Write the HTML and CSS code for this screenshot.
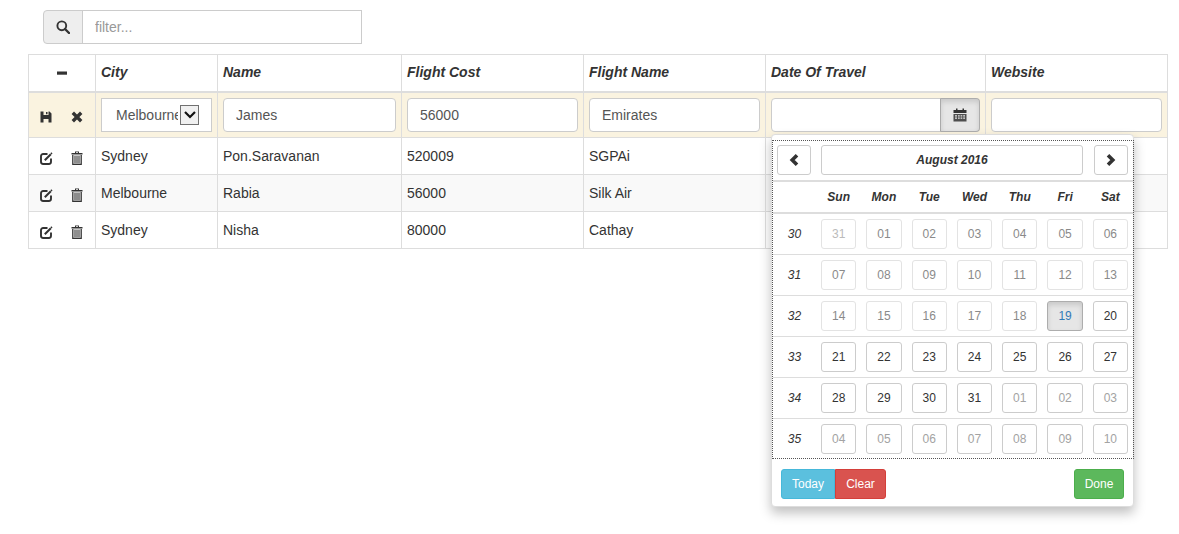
FILE: index.html
```html
<!DOCTYPE html>
<html lang="en">
<head>
    <meta charset="UTF-8">
    <title>Flights</title>
    <link rel="stylesheet" href="styles.css">
</head>
<body>
    <svg class="icon-defs" width="0" height="0">
        <symbol id="i-search" viewBox="0 0 14 14"><circle cx="5.8" cy="5.8" r="4.4" fill="none" stroke="currentColor" stroke-width="1.9"/><path d="M9 9l4 4" stroke="currentColor" stroke-width="2.4" stroke-linecap="round"/></symbol>
        <symbol id="i-minus" viewBox="0 0 14 14"><rect x="2" y="5.500" width="10" height="3.200" fill="currentColor"/></symbol>
        <symbol id="i-save" viewBox="0 0 14 14"><path fill="currentColor" fill-rule="evenodd" d="M1.500 1.500h9L12.500 3.500v9h-3V9h-5v3.500h-3zM4.500 1.500v3.500h5V1.500zM7 2h1.500v2.200H7z"/></symbol>
        <symbol id="i-remove" viewBox="0 0 14 14"><path d="M2.800 2.800l8.400 8.400M11.200 2.800l-8.400 8.400" stroke="currentColor" stroke-width="3.400"/></symbol>
        <symbol id="i-edit" viewBox="0 0 14 14"><path d="M8.500 3H4.200A2.200 2.200 0 0 0 2 5.200v5.600A2.200 2.200 0 0 0 4.200 13h5.600a2.200 2.200 0 0 0 2.200-2.200V7.500" fill="none" stroke="currentColor" stroke-width="1.900"/><path d="M5.800 9.200l6-6" stroke="currentColor" stroke-width="2"/><path fill="currentColor" d="M12.300 1.300l1.200 1.200-.9.900-1.200-1.200z"/></symbol>
        <symbol id="i-trash" viewBox="0 0 14 14"><path fill="currentColor" d="M5 .5h4v1.500h3.500v1.500h-11V2H5zM6 1.200V2h2v-.8z"/><path d="M2.800 4v9.300h8.400V4" fill="none" stroke="currentColor" stroke-width="1.300"/><path d="M5 4.500v8M7 4.500v8M9 4.500v8" stroke="currentColor" stroke-width="1.100"/></symbol>
        <symbol id="i-calendar" viewBox="0 0 14 14"><path fill="currentColor" d="M3 .5h1.500V2h5V.5H11V2h2.500v3H.5V2H3z"/><path fill="currentColor" fill-rule="evenodd" fill-opacity=".85" d="M.5 6h13v7.500H.5zM2 7.200v1.300h2V7.200zM5 7.200v1.300h1.700V7.200zM7.600 7.200v1.300h1.700V7.200zM10.200 7.200v1.300H12V7.200zM2 9.500v1.300h2V9.500zM5 9.500v1.300h1.700V9.500zM7.600 9.500v1.300h1.700V9.500zM10.200 9.500v1.300H12V9.500z"/></symbol>
        <symbol id="i-left" viewBox="0 0 14 14"><path d="M10 2.200L5.200 7l4.800 4.800" fill="none" stroke="currentColor" stroke-width="3.600"/></symbol>
        <symbol id="i-right" viewBox="0 0 14 14"><path d="M4 2.200L8.800 7 4 11.800" fill="none" stroke="currentColor" stroke-width="3.600"/></symbol>
        <symbol id="i-down" viewBox="0 0 14 14"><path d="M2 4l5 5 5-5" fill="none" stroke="currentColor" stroke-width="2.200"/></symbol>
    </svg>

    <div class="filter">
        <span class="filter-addon"><svg class="icon"><use href="#i-search"/></svg></span>
        <input class="filter-input" type="text" placeholder="filter...">
    </div>

    <div class="grid-wrap">
        <table class="grid">
            <colgroup>
                <col class="col-actions"><col class="col-city"><col class="col-name"><col class="col-cost">
                <col class="col-flight"><col class="col-date"><col class="col-web">
            </colgroup>
            <thead>
                <tr>
                    <th class="actions"><svg class="icon"><use href="#i-minus"/></svg></th>
                    <th>City</th>
                    <th>Name</th>
                    <th>Flight Cost</th>
                    <th>Flight Name</th>
                    <th>Date Of Travel</th>
                    <th>Website</th>
                </tr>
            </thead>
            <tbody>
                <tr class="editing">
                    <td class="actions">
                        <div class="action-icons">
                            <svg class="icon"><use href="#i-save"/></svg>
                            <svg class="icon"><use href="#i-remove"/></svg>
                        </div>
                    </td>
                    <td>
                        <div class="select-box">
                            <span class="select-value">Melbourne</span>
                            <span class="select-arrow"><svg class="icon"><use href="#i-down"/></svg></span>
                        </div>
                    </td>
                    <td><input class="field" type="text" value="James"></td>
                    <td><input class="field" type="text" value="56000"></td>
                    <td><input class="field" type="text" value="Emirates"></td>
                    <td>
                        <div class="date-group">
                            <input class="field date-field" type="text">
                            <button class="date-btn"><svg class="icon"><use href="#i-calendar"/></svg></button>
                        </div>
                    </td>
                    <td><input class="field" type="text"></td>
                </tr>
                <tr>
                    <td class="actions">
                        <div class="action-icons">
                            <svg class="icon"><use href="#i-edit"/></svg>
                            <svg class="icon"><use href="#i-trash"/></svg>
                        </div>
                    </td>
                    <td>Sydney</td><td>Pon.Saravanan</td><td>520009</td><td>SGPAi</td><td></td><td></td>
                </tr>
                <tr class="odd">
                    <td class="actions">
                        <div class="action-icons">
                            <svg class="icon"><use href="#i-edit"/></svg>
                            <svg class="icon"><use href="#i-trash"/></svg>
                        </div>
                    </td>
                    <td>Melbourne</td><td>Rabia</td><td>56000</td><td>Silk Air</td><td></td><td></td>
                </tr>
                <tr>
                    <td class="actions">
                        <div class="action-icons">
                            <svg class="icon"><use href="#i-edit"/></svg>
                            <svg class="icon"><use href="#i-trash"/></svg>
                        </div>
                    </td>
                    <td>Sydney</td><td>Nisha</td><td>80000</td><td>Cathay</td><td></td><td></td>
                </tr>
            </tbody>
        </table>

        <div class="picker">
            <div class="cal">
                <div class="cal-nav">
                    <button class="cal-btn nav-btn"><svg class="icon"><use href="#i-left"/></svg></button>
                    <button class="cal-btn title-btn">August 2016</button>
                    <button class="cal-btn nav-btn"><svg class="icon"><use href="#i-right"/></svg></button>
                </div>
                <div class="cal-row cal-head">
                    <span></span><span>Sun</span><span>Mon</span><span>Tue</span><span>Wed</span><span>Thu</span><span>Fri</span><span>Sat</span>
                </div>
                <div class="cal-row">
                    <span class="week">30</span>
                    <button class="day faint">31</button><button class="day off">01</button><button class="day off">02</button><button class="day off">03</button><button class="day off">04</button><button class="day off">05</button><button class="day off">06</button>
                </div>
                <div class="cal-row">
                    <span class="week">31</span>
                    <button class="day off">07</button><button class="day off">08</button><button class="day off">09</button><button class="day off">10</button><button class="day off">11</button><button class="day off">12</button><button class="day off">13</button>
                </div>
                <div class="cal-row">
                    <span class="week">32</span>
                    <button class="day off">14</button><button class="day off">15</button><button class="day off">16</button><button class="day off">17</button><button class="day off">18</button><button class="day today">19</button><button class="day">20</button>
                </div>
                <div class="cal-row">
                    <span class="week">33</span>
                    <button class="day">21</button><button class="day">22</button><button class="day">23</button><button class="day">24</button><button class="day">25</button><button class="day">26</button><button class="day">27</button>
                </div>
                <div class="cal-row">
                    <span class="week">34</span>
                    <button class="day">28</button><button class="day">29</button><button class="day">30</button><button class="day">31</button><button class="day muted">01</button><button class="day muted">02</button><button class="day muted">03</button>
                </div>
                <div class="cal-row">
                    <span class="week">35</span>
                    <button class="day muted">04</button><button class="day muted">05</button><button class="day muted">06</button><button class="day muted">07</button><button class="day muted">08</button><button class="day muted">09</button><button class="day muted">10</button>
                </div>
            </div>
            <div class="picker-foot">
                <div class="foot-left">
                    <button class="foot-btn btn-today">Today</button>
                    <button class="foot-btn btn-clear">Clear</button>
                </div>
                <button class="foot-btn btn-done">Done</button>
            </div>
        </div>
    </div>
</body>
</html>
```

FILE: styles.css
```css
* {
    box-sizing: border-box;
}

body {
    margin: 0;
    min-height: 534px;
    padding: 10px 11px 0 28px;
    background-color: #fff;
    color: #333;
    font-family: "Liberation Sans", Arial, sans-serif;
    font-size: 14px;
    line-height: 20px;
}

button {
    font-family: inherit;
    padding: 0;
    cursor: pointer;
}

.icon-defs {
    position: absolute;
}

.icon {
    display: block;
    width: 14px;
    height: 14px;
}

/* filter */
.filter {
    display: flex;
    width: 319px;
    height: 34px;
    margin-left: 15px;
}
.filter-addon {
    display: flex;
    align-items: center;
    justify-content: center;
    width: 40px;
    background-color: #eee;
    border: 1px solid #ccc;
    border-radius: 4px 0 0 4px;
}
.filter-input {
    flex: 1;
    min-width: 0;
    margin-left: -1px;
    padding: 6px 12px;
    border: 1px solid #ccc;
    font: inherit;
    color: #555;
}
.filter-input::placeholder {
    color: #999;
}

/* table */
.grid-wrap {
    position: relative;
    width: 1140px;
    margin-top: 10px;
}
.grid {
    width: 1139px;
    border-collapse: collapse;
    table-layout: fixed;
}
.col-actions { width: 67px; }
.col-city { width: 122px; }
.col-name { width: 184px; }
.col-cost { width: 182px; }
.col-flight { width: 182px; }
.col-date { width: 220px; }
.col-web { width: 182px; }

.grid th,
.grid td {
    padding: 8px 5px;
    border: 1px solid #ddd;
    vertical-align: middle;
    text-align: left;
}
.grid th {
    padding-top: 7px;
    padding-bottom: 9px;
    border-bottom-width: 2px;
    font-style: italic;
    font-weight: bold;
}
.grid th.actions .icon {
    margin: 2px auto 0;
}
.action-icons {
    display: flex;
    justify-content: center;
    gap: 17px;
}
.grid td.actions .action-icons {
    position: relative;
    top: 2px;
    left: -1px;
}

.odd td {
    background-color: #f9f9f9;
}
.grid .editing td {
    padding-top: 5px;
    padding-bottom: 5px;
    background-color: #faf3e0;
    border-top: none;
}

.field {
    display: block;
    width: 100%;
    height: 34px;
    padding: 6px 12px;
    border: 1px solid #ccc;
    border-radius: 4px;
    background-color: #fff;
    color: #555;
    font: inherit;
}

.select-box {
    display: flex;
    align-items: center;
    height: 34px;
    padding: 0 12px 0 14px;
    border: 1px solid #ccc;
    background-color: #fff;
    color: #555;
}
.select-value {
    width: 62px;
    margin-right: 2px;
    flex-shrink: 0;
    overflow: hidden;
    white-space: nowrap;
}
.select-arrow {
    display: flex;
    align-items: center;
    justify-content: center;
    width: 19px;
    height: 20px;
    border: 1px solid #707070;
    background-color: #f0f0f0;
    color: #111;
    flex-shrink: 0;
}

/* date picker */
.date-group {
    display: flex;
    width: 209px;
}
.date-field {
    flex: 1;
    min-width: 0;
    border-radius: 4px 0 0 4px;
}
.date-btn {
    display: flex;
    align-items: center;
    justify-content: center;
    width: 40px;
    height: 34px;
    margin-left: -1px;
    border: 1px solid #adadad;
    border-left-color: #aaa;
    border-radius: 0 4px 4px 0;
    background-color: #e6e6e6;
    box-shadow: inset 0 3px 5px rgba(0, 0, 0, .125);
    color: #333;
}

.picker {
    position: absolute;
    top: 80px;
    left: 743px;
    z-index: 10;
    width: 363px;
    height: 373px;
    padding-top: 5px;
    border: 1px solid #ddd;
    border-radius: 4px;
    background-color: #fff;
    box-shadow: 0 6px 12px rgba(0, 0, 0, .25);
}
.cal {
    width: 362px;
    border: 1px dotted #555;
}
.cal-nav {
    display: flex;
    justify-content: space-between;
    padding: 4px 5px 5px 4px;
    border-bottom: 2px solid #ddd;
}
.cal-btn,
.day {
    height: 30px;
    border: 1px solid #ccc;
    border-radius: 3px;
    background-color: #fff;
    color: #333;
    font-size: 12px;
}
.nav-btn {
    display: flex;
    align-items: center;
    justify-content: center;
    width: 34px;
}
.title-btn {
    width: 262px;
    margin-right: 1px;
    font-style: italic;
    font-weight: bold;
}
.cal-row {
    display: grid;
    grid-template-columns: 43px repeat(7, 1fr);
    align-items: center;
    padding: 5px 0;
    border-bottom: 1px solid #ddd;
    font-size: 12px;
    text-align: center;
}
.cal-row:last-child {
    padding-bottom: 4px;
    border-bottom: none;
}
.cal-head {
    height: 32px;
    padding: 0;
    border-bottom-width: 2px;
    font-style: italic;
    font-weight: bold;
}
.week {
    font-style: italic;
}
.day {
    margin: 0 5px;
    min-width: 0;
}
.day.off {
    border-color: #e3e3e3;
    color: #8a8a8a;
}
.day.faint {
    border-color: #e3e3e3;
    color: #bbb;
}
.day.muted {
    color: #a3a3a3;
}
.day.today {
    border-color: #adadad;
    background-color: #e6e6e6;
    box-shadow: inset 0 3px 5px rgba(0, 0, 0, .125);
    color: #337ab7;
}

.picker-foot {
    display: flex;
    justify-content: space-between;
    padding: 10px 9px 8px 9px;
}
.foot-left {
    display: flex;
}
.foot-btn {
    height: 30px;
    border: 1px solid transparent;
    border-radius: 3px;
    color: #fff;
    font-size: 12px;
}
.btn-today {
    width: 54px;
    background-color: #5bc0de;
    border-color: #46b8da;
    border-radius: 3px 0 0 3px;
}
.btn-clear {
    width: 51px;
    background-color: #d9534f;
    border-color: #d43f3a;
    border-radius: 0 3px 3px 0;
}
.btn-done {
    width: 50px;
    background-color: #5cb85c;
    border-color: #4cae4c;
}
```
